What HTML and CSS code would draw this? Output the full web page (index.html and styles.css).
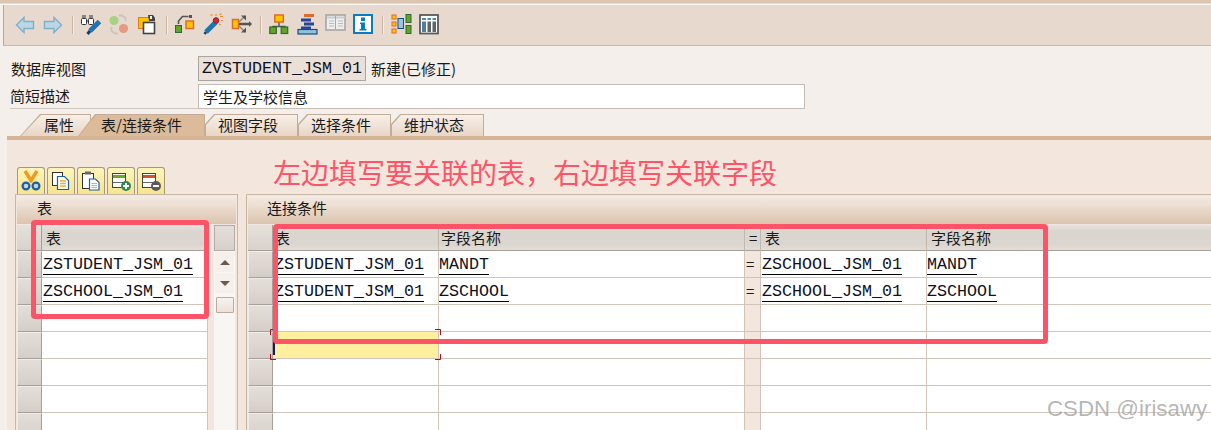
FILE: index.html
```html
<!DOCTYPE html>
<html lang="zh-CN">
<head>
<meta charset="utf-8">
<title>数据库视图</title>
<link rel="stylesheet" href="styles.css">
</head>
<body>
<div class="stage">
  <div class="topstrip"></div>
  <div class="toolbar">
    <svg class="ti" viewBox="0 0 22 22"><path d="M2.500 11 10 3.500V7.500H19.500V14.500H10V18.500Z" fill="#bcd6e6" stroke="#7fb0cb" stroke-width="1.400"/></svg>
    <svg class="ti" viewBox="0 0 22 22"><path d="M19.500 11 12 3.500V7.500H2.500V14.500H12V18.500Z" fill="#bcd6e6" stroke="#7fb0cb" stroke-width="1.400"/></svg>
    <i class="sep"></i>
    <svg class="ti" viewBox="0 0 22 22"><rect x="1.500" y="4.500" width="5" height="6" rx="1" fill="#fff" stroke="#333"/><rect x="8.500" y="4.500" width="5" height="6" rx="1" fill="#fff" stroke="#333"/><path d="M3 1v3M5 1v3M10 1v3M12 1v3M6 7h3" stroke="#333"/><path d="M19.500 7.500 10 17" stroke="#1f74ad" stroke-width="5"/><path d="M10 17 7.500 20" stroke="#123c66" stroke-width="3"/></svg>
    <svg class="ti" viewBox="0 0 22 22"><path d="M11 1.500h3l3.500 2.500v3M10 19.500H7L3.500 17v-4" fill="none" stroke="#c9c4bf" stroke-width="1.800"/><circle cx="6" cy="6.500" r="4.600" fill="#a8d184"/><circle cx="15.500" cy="14.500" r="4.600" fill="#e49b82"/></svg>
    <svg class="ti" viewBox="0 0 22 22"><rect x="2.500" y="3.500" width="11" height="11" fill="#ffc400" stroke="#e07b20"/><rect x="7.500" y="8.500" width="11" height="11" fill="#fff" stroke="#444" stroke-width="1.600"/><path d="M12 1h5l2 3v3h-6z" fill="#444"/><path d="M14 2h2v3h-2z" fill="#eee"/></svg>
    <i class="sep"></i>
    <svg class="ti" viewBox="0 0 22 22"><rect x="1.500" y="11.500" width="6" height="7" fill="#62a32c" stroke="#2f6b2a"/><rect x="12" y="7" width="7.500" height="7.500" fill="#ffc400" stroke="#e06a28" stroke-width="1.500"/><path d="M4.500 10V7l4-4.500h6" fill="none" stroke="#555" stroke-width="1.600"/><path d="M15 1v3h3V1z" fill="#555"/></svg>
    <svg class="ti" viewBox="0 0 22 22"><path d="M14 8 4 18" stroke="#1f74ad" stroke-width="5"/><path d="M4 18 2.500 20" stroke="#123c66" stroke-width="2.500"/><circle cx="14" cy="6.500" r="2.800" fill="#e0202a" stroke="#7a2a3a"/><path d="M14 0v2M18 2.500h3M17.500 1l2-1.500M19 6.500h2M17 10l2 1M8 1h3" stroke="#ef8f2a" stroke-width="1.200"/></svg>
    <svg class="ti" viewBox="0 0 22 22"><rect x="1.500" y="5.500" width="6" height="9" fill="#ffc400" stroke="#e06a28" stroke-width="1.500"/><path d="M8 10H19" stroke="#555" stroke-width="2.500"/><path d="M18 7l3 3-3 3z" fill="#555"/><path d="M8 8 13 3M8 12l5 5" stroke="#8f8a85" stroke-width="1.600"/><path d="M10 1.500h5v5zM10 18.500h5v-5z" fill="#555"/></svg>
    <i class="sep"></i>
    <svg class="ti" viewBox="0 0 22 22"><path d="M11 7v5M5 17v-4.500H17V17" fill="none" stroke="#555" stroke-width="1.400"/><rect x="6.800" y="1" width="8.500" height="7" fill="#ffc400" stroke="#e06a28" stroke-width="1.500"/><rect x="1.800" y="13" width="6.500" height="6.500" fill="#62a32c" stroke="#2f6b2a" stroke-width="1.200"/><rect x="13.200" y="13" width="6.500" height="6.500" fill="#62a32c" stroke="#2f6b2a" stroke-width="1.200"/></svg>
    <svg class="ti" viewBox="0 0 22 22"><path d="M7 0h10v3H7z" fill="#e06a28"/><path d="M4 4.500h10v3H4zM7 8.500h10v3H7zM4 12.500h10v3H4z" fill="#27459a"/><rect x="1" y="15.500" width="19" height="4.500" fill="#8fc0de" stroke="#14507f" stroke-width="1.200"/></svg>
    <svg class="ti" viewBox="0 0 22 22"><rect x="1" y="1" width="19" height="15" fill="#eee" stroke="#a9a5a1" stroke-width="1.600"/><path d="M2 2.500h18v2H2z" fill="#c8cdd4"/><path d="M10.500 2v13" stroke="#a9a5a1"/><path d="M4 7h5M4 9.500h5M4 12h5M13 7h5M13 9.500h5M13 12h5" stroke="#b8bcc2"/></svg>
    <svg class="ti" viewBox="0 0 22 22"><rect x="1" y="1" width="18" height="18" fill="#fff" stroke="#0b7cc2" stroke-width="2"/><path d="M8 3.500h4v3.500H8zM7 8.500h5V15h1.500v1.500h-7V15H8v-5H7z" fill="#0b7cc2"/></svg>
    <i class="sep"></i>
    <svg class="ti" viewBox="0 0 22 22"><rect x="1" y="1" width="4" height="4" fill="#ffc400" stroke="#e06a28"/><rect x="1" y="8" width="4" height="4" fill="#ffc400" stroke="#e06a28"/><rect x="1" y="15" width="4" height="4" fill="#ffc400" stroke="#e06a28"/><rect x="7" y="4.500" width="5.500" height="10" fill="#9dc3de" stroke="#14507f"/><rect x="15" y=".5" width="5" height="8" fill="#62a32c" stroke="#2f6b2a"/><rect x="15" y="11.500" width="5" height="8" fill="#62a32c" stroke="#2f6b2a"/></svg>
    <svg class="ti" viewBox="0 0 22 22"><rect x="1" y="1" width="18" height="18.500" fill="#fff" stroke="#5a5a5a" stroke-width="1.800"/><path d="M3 4h4v2H3zM8.500 4H12v2H8.500zM13.500 4H17v2h-3.500z" fill="#4a8ab8"/><path d="M8.500 7.500H12V18H8.500zM13.500 7.500H17V18h-3.500z" fill="#5f6468"/><path d="M3 7.500h4V18H3z" fill="#4a80a8"/></svg>
  </div>

  <div class="form">
    <div class="formrow">
      <span class="lbl">数据库视图</span>
      <span class="viewname mono">ZVSTUDENT_JSM_01</span>
      <span class="status">新建(已修正)</span>
    </div>
    <div class="formrow">
      <span class="lbl lbl-line">简短描述</span>
      <span class="desc">学生及学校信息</span>
    </div>
  </div>

  <div class="tabs">
    <div class="tab tab-first"><span>属性</span></div>
    <div class="tab tab-on"><span>表/连接条件</span></div>
    <div class="tab"><span>视图字段</span></div>
    <div class="tab"><span>选择条件</span></div>
    <div class="tab"><span>维护状态</span></div>
  </div>

  <div class="panel">
    <div class="btns">
      <button class="btn"><svg viewBox="0 0 22 22"><path d="M5 1l7 11M17 1 10 12" stroke="#ef9a1f" stroke-width="3.400"/><circle cx="6" cy="16" r="3.400" fill="#bcd6e6" stroke="#1d5f9a" stroke-width="2.200"/><circle cx="16" cy="16" r="3.400" fill="#bcd6e6" stroke="#1d5f9a" stroke-width="2.200"/></svg></button>
      <button class="btn"><svg viewBox="0 0 22 22"><rect x="2.500" y="2.500" width="10" height="13" fill="#fff" stroke="#333"/><path d="M7.500 6.500h7l4 4v9h-11z" fill="#fff" stroke="#1d5f9a" stroke-width="1.200"/><path d="M10 11h6M10 13.500h6M10 16h6" stroke="#f0b020" stroke-width="1.400"/></svg></button>
      <button class="btn"><svg viewBox="0 0 22 22"><rect x="2.500" y="3.500" width="11" height="15" fill="#fff" stroke="#333"/><rect x="5" y="1.500" width="6" height="3" fill="#666"/><path d="M9.500 9h6l3.500 3.500V20H9.500z" fill="#fff" stroke="#1d5f9a" stroke-width="1.200"/><path d="M11.500 13.500H17M11.500 15.500H17M11.500 17.500H17" stroke="#f0b020" stroke-width="1.200"/></svg></button>
      <button class="btn"><svg viewBox="0 0 22 22"><rect x="2.500" y="3.500" width="13" height="14" fill="#fff" stroke="#444"/><path d="M3 5h12v3H3z" fill="#6ca82c"/><path d="M3 12.500h12" stroke="#666"/><circle cx="16" cy="16" r="5" fill="#2f8a52"/><path d="M13 16h6M16 13v6" stroke="#fff" stroke-width="2"/></svg></button>
      <button class="btn"><svg viewBox="0 0 22 22"><rect x="2.500" y="3.500" width="13" height="14" fill="#fff" stroke="#444"/><path d="M3 5h12v3H3z" fill="#d2552a"/><path d="M3 12.500h12" stroke="#666"/><circle cx="16" cy="16" r="5" fill="#5a5a5a"/><path d="M13 16h6" stroke="#fff" stroke-width="2"/></svg></button>
    </div>

    <div class="tables">
      <section class="tblbox tblbox-left">
        <h2 class="tbltitle title-left">表</h2>
        <div class="tblbody">
          <div class="grid grid-left">
            <div class="selh"></div><div class="hd hd-left">表</div>
            <div class="sel"></div><div class="cell"><u class="mono">ZSTUDENT_JSM_01</u></div>
            <div class="sel"></div><div class="cell"><u class="mono">ZSCHOOL_JSM_01</u></div>
            <div class="sel"></div><div class="cell"></div>
            <div class="sel"></div><div class="cell"></div>
            <div class="sel"></div><div class="cell"></div>
            <div class="sel"></div><div class="cell"></div>
            <div class="sel"></div><div class="cell"></div>
          </div>
          <div class="vscroll">
            <div class="vs-head"></div>
            <div class="vs-arrow"><b class="up"></b></div>
            <div class="vs-arrow"><b class="down"></b></div>
            <div class="vs-thumb"></div>
          </div>
        </div>
      </section>

      <section class="tblbox tblbox-right">
        <h2 class="tbltitle title-right">连接条件</h2>
        <div class="grid grid-right">
          <div class="selh"></div><div class="hd">表</div><div class="hd">字段名称</div><div class="hd hd-eq">=</div><div class="hd hd-t2">表</div><div class="hd hd-f2">字段名称</div>
          <div class="sel"></div><div class="cell"><u class="mono">ZSTUDENT_JSM_01</u></div><div class="cell cell-tight"><u class="mono">MANDT</u></div><div class="eq">=</div><div class="cell"><u class="mono">ZSCHOOL_JSM_01</u></div><div class="cell cell-tight"><u class="mono">MANDT</u></div>
          <div class="sel"></div><div class="cell"><u class="mono">ZSTUDENT_JSM_01</u></div><div class="cell cell-tight"><u class="mono">ZSCHOOL</u></div><div class="eq">=</div><div class="cell"><u class="mono">ZSCHOOL_JSM_01</u></div><div class="cell cell-tight"><u class="mono">ZSCHOOL</u></div>
          <div class="sel"></div><div class="cell"></div><div class="cell"></div><div class="eq"></div><div class="cell"></div><div class="cell"></div>
          <div class="sel"></div>
          <div class="cell cell-focus">
            <svg class="marks" viewBox="0 0 171 31"><path d="M.5 6V.5H6M165 .5h5.500V6M.5 25v5.500H6M165 30.500h5.500V25" fill="none" stroke="#a80f1e"/></svg>
            <i class="caret"></i>
          </div>
          <div class="cell"></div><div class="eq"></div><div class="cell"></div><div class="cell"></div>
          <div class="sel"></div><div class="cell"></div><div class="cell"></div><div class="eq"></div><div class="cell"></div><div class="cell"></div>
          <div class="sel"></div><div class="cell"></div><div class="cell"></div><div class="eq"></div><div class="cell"></div><div class="cell"></div>
          <div class="sel"></div><div class="cell"></div><div class="cell"></div><div class="eq"></div><div class="cell"></div><div class="cell"></div>
        </div>
      </section>
    </div>
  </div>

  <div class="note">左边填写要关联的表，右边填写关联字段</div>
  <div class="mark mark-left"></div>
  <div class="mark mark-right"></div>
  <div class="watermark">CSDN @irisawy</div>
</div>
</body>
</html>
```
FILE: styles.css
```css
* { box-sizing: border-box; }
html, body { margin: 0; padding: 0; }
body { width: 1211px; height: 430px; overflow: hidden; background: #f4efeb; }
.stage {
  position: relative; width: 1211px; height: 430px; overflow: hidden;
  font: 15px/1 "Noto Sans CJK SC", "Liberation Sans", sans-serif; color: #1a1a1a;
  background: #f4efeb;
}
.mono { font-family: "Liberation Mono", "Noto Sans CJK SC", monospace; font-size: 16.67px; color: #10101c; }

.topstrip { height: 5px; background: linear-gradient(#dcc6b2 0 3px, #e8d9ce 3px 4px, #fbf8f5 4px); }
.toolbar {
  height: 41px; margin-left: 3px; padding: 9px 0 0 10px;
  display: flex; align-items: flex-start; gap: 6.3px;
  background: #e8d9ce; border-left: 1px solid #b9a99a; border-bottom: 1px solid #c9b9aa;
}
.ti { width: 22px; height: 22px; flex: none; overflow: visible; }
.sep { width: 1px; height: 18px; margin: 2px 1px 0; background: #cdb69f; box-shadow: 1px 0 0 #f5ece4; flex: none; }

.form { padding: 10px 0 0 11px; }
.formrow { display: flex; align-items: center; height: 25px; margin-bottom: 3px; }
.lbl { width: 187px; flex: none; }
.lbl-line { margin-left: -1px; width: 188px; height: 25px; line-height: 24px; border-bottom: 1px solid #cfc7bf; }
.viewname {
  width: 168px; height: 25px; line-height: 23px; padding-left: 3px; flex: none;
  background: #ebe0d7; border: 1px solid #a9a6a2;
}
.status { margin-left: 5px; }
.desc { width: 607px; height: 25px; line-height: 24px; padding-left: 4px; background: #fff; border: 1px solid #c5bdb5; }

.tabs { display: flex; margin: 5px 0 0 20px; height: 22px; position: relative; z-index: 1; }
.tab {
  width: 93px; height: 22px; padding: 1px 1px 0 1px; flex: none;
  background: #c3ad98;
  clip-path: polygon(0 100%, 0 10px, 9px 0, 100% 0, 100% 100%);
}
.tab span {
  display: block; height: 21px; line-height: 20px; padding-left: 12px;
  background: linear-gradient(#f8efe7, #e8d6c6);
  clip-path: polygon(0 100%, 0 10px, 9px 0, 100% 0, 100% 100%);
}
.tab-first { width: 71px; clip-path: polygon(0 100%, 20px 0, 100% 0, 100% 6px, 59px 100%); }
.tab-first span { padding-left: 23px; clip-path: polygon(0 100%, 20px 0, 100% 0, 100% 6px, 59px 100%); }
.tab-on { width: 127px; margin-left: -13px; clip-path: polygon(0 100%, 17px 0, 100% 0, 100% 100%); }
.tab-on span { background: #dcbb9b; padding-left: 22px; clip-path: polygon(0 100%, 17px 0, 100% 0, 100% 100%); }

.panel {
  margin-left: 7px; height: 294px; padding: 27px 0 0 8px;
  background: #f3e7dd; border-top: 4px solid #d6b596;
}
.btns { display: flex; gap: 2px; height: 27px; margin-left: 2px; }
.btn {
  width: 28px; height: 27px; padding: 2px; border: 1px solid #a39a78; border-bottom: 0; border-radius: 3px 3px 0 0;
  background: linear-gradient(#fff5bb, #f6e48f);
}
.btn svg { width: 22px; height: 22px; display: block; }

.tables { display: flex; gap: 8px; }
.tblbox { border: 1px solid #c9b8a7; padding: 1px; background: #f3e7dd; height: 240px; flex: none; }
.tblbox-left { width: 223px; }
.tblbox-right { width: 970px; }
.tbltitle {
  margin: 0; height: 28px; line-height: 23px; font-size: 15px; font-weight: 400;
  background: linear-gradient(#f4ebe3, #dcc4af);
}
.title-left { padding-left: 20px; }
.title-right { padding-left: 19px; }
.tblbody { display: flex; }
.grid { display: grid; grid-template-rows: 26px repeat(7, 27px); margin-top: 1px; background: #fff; }
.grid-left { grid-template-columns: 25px 166px; width: 191px; flex: none; }
.grid-right { grid-template-columns: 25px 166px 306px 16px 166px 288px; }
.selh { background: linear-gradient(#e6e1dc, #d9d2cc); border-right: 1px solid #a8a098; border-bottom: 1px solid #a8a098; }
.sel {
  background: linear-gradient(#e4deda, #d5cec8); border: 1px solid #f0ece8;
  border-right-color: #a8a098; border-bottom-color: #a8a098;
}
.hd {
  background: linear-gradient(#e8e3df 0, #dbd5d0 25%, #dbd5d0 75%, #e2ddd8);
  padding: 3px 0 0 2px; height: 26px; line-height: 20px;
  border-right: 1px solid #c2b8ae; border-bottom: 1px solid #a8a098;
}
.hd-left { padding-left: 4px; }
.hd-eq { padding-left: 4px; }
.hd-t2 { padding-left: 4px; }
.hd-f2 { padding-left: 4px; }
.cell { position: relative; padding: 2px 0 0 1px; line-height: 20px; background: #fff; border-right: 1px solid #d1c5b9; border-bottom: 1px solid #d1c5b9; }
.cell-tight { padding-left: 0; }
.cell u { display: inline-block; text-decoration: none; height: 20px; line-height: 19px; border-bottom: 1px solid #000; }
.eq { background: #f3e7dd; border-right: 1px solid #d1c5b9; border-bottom: 1px solid #d1c5b9; border-left: 1px solid #d1c5b9; padding: 3px 0 0 1px; line-height: 20px; margin-left: -1px; }
.cell-focus { background: #fff0a0; z-index: 2; }
.marks { position: absolute; left: -3px; top: -3px; width: 171px; height: 31px; overflow: visible; }
.caret { position: absolute; left: 0; top: 4px; width: 2px; height: 19px; background: #0c1a6a; }

.vscroll { width: 21px; margin-left: 6px; margin-top: 1px; background: #f9f5f3; height: 205px; display: flex; flex-direction: column; align-items: center; }
.vs-head { width: 21px; height: 26px; flex: none; background: linear-gradient(#e4deda, #d7d0ca); border: 1px solid #b5aca3; }
.vs-arrow { width: 19px; height: 20px; margin-top: 1px; display: flex; align-items: center; justify-content: center; background: #f6f0ec; }
.vs-arrow b { width: 0; height: 0; border-left: 5px solid transparent; border-right: 5px solid transparent; }
.up { border-bottom: 5px solid #6a5a4e; }
.down { border-top: 5px solid #6a5a4e; }
.vs-thumb { width: 18px; height: 16px; margin-top: 4px; background: linear-gradient(#f8f1ec, #ece2da); border: 1px solid #b8aca0; border-radius: 1px; }

.note { position: absolute; left: 273px; top: 156px; font-size: 28px; line-height: 32px; color: #ff5468; white-space: nowrap; }
.mark { position: absolute; z-index: 3; border: 5px solid #ff5468; border-radius: 4px; }
.mark-left { left: 31px; top: 220px; width: 178px; height: 99px; }
.mark-right { left: 273px; top: 224px; width: 775px; height: 120px; }
.watermark {
  position: absolute; z-index: 3; left: 1047px; top: 396px; font: 22.3px/26px "Liberation Sans", Arial, sans-serif;
  color: rgba(135, 135, 135, .62); text-shadow: 1px 1px 1px rgba(255,255,255,.7); white-space: nowrap;
}
```
